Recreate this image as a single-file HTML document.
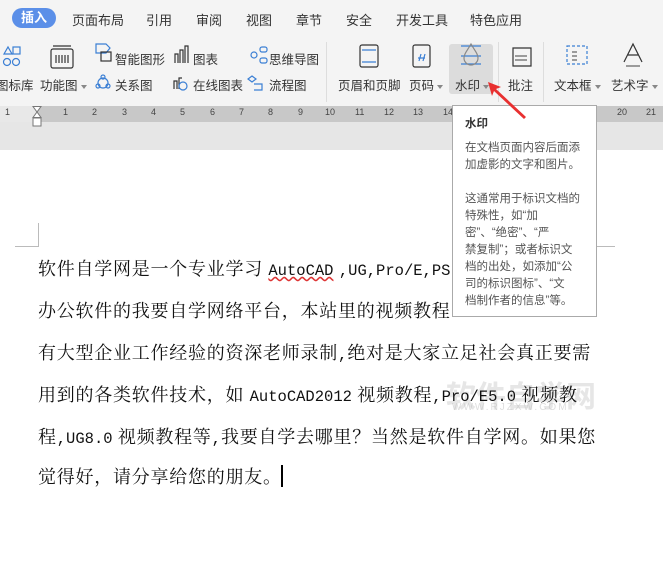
<!DOCTYPE html>
<html><head><meta charset="utf-8"><style>
*{margin:0;padding:0;box-sizing:border-box}
body{width:663px;height:586px;overflow:hidden;background:#fff;position:relative;font-family:"Liberation Sans","Noto Sans CJK SC",sans-serif;color:#333}
.a{position:absolute;white-space:nowrap}
.tab{position:absolute;top:10px;font-size:13px;color:#333}
.lbl{position:absolute;font-size:12.5px;color:#333;white-space:nowrap}
.tri{display:inline-block;border-left:3px solid transparent;border-right:3px solid transparent;border-top:4px solid #888;vertical-align:middle;margin-left:3px}
.ln{position:absolute;left:38px;font-family:"Noto Serif CJK SC",serif;font-size:18px;color:#111;white-space:nowrap;letter-spacing:0.75px}
.m{font-family:"Liberation Mono",monospace;font-size:15.5px;letter-spacing:0}
.tt{position:absolute;left:465px;font-size:11.5px;color:#555;white-space:nowrap}
</style></head><body>
<div class="a" style="left:0;top:0;width:663px;height:106px;background:#f4f4f4"></div>
<div class="a" style="left:12px;top:8px;width:44px;height:20px;border-radius:10px;background:#5b8fe8;color:#fff;font-size:13px;font-weight:bold;text-align:center;line-height:20px">插入</div>
<div class="tab" style="left:72px">页面布局</div>
<div class="tab" style="left:146px">引用</div>
<div class="tab" style="left:196px">审阅</div>
<div class="tab" style="left:246px">视图</div>
<div class="tab" style="left:296px">章节</div>
<div class="tab" style="left:346px">安全</div>
<div class="tab" style="left:396px">开发工具</div>
<div class="tab" style="left:470px">特色应用</div>
<div class="a" style="left:326px;top:42px;width:1px;height:60px;background:#ddd"></div>
<div class="a" style="left:498px;top:42px;width:1px;height:60px;background:#ddd"></div>
<div class="a" style="left:543px;top:42px;width:1px;height:60px;background:#ddd"></div>
<div class="a" style="left:449px;top:44px;width:44px;height:50px;background:#dcdcdc;border-radius:3px"></div>
<svg class="a" style="left:0;top:40px" width="663" height="30" fill="none" stroke-width="1.2">
<g stroke="#3b7fd4"><circle cx="7" cy="22" r="3.5"/><circle cx="16" cy="22" r="3.5"/><path d="M4 14l4-7 4 7z"/><rect x="13" y="7" width="7" height="7"/></g>
<g stroke="#333"><rect x="51" y="9" width="22" height="19" rx="2"/><path d="M53 6h18M56 15v8M59 15v8M62 15v8M65 15v8M68 15v8"/></g>
<g stroke="#3b7fd4"><path d="M96 4h10l4 4-4 5H96z"/></g><rect x="101" y="12" width="10" height="9" stroke="#333"/>
<g stroke="#333"><path d="M175 23V14h3v9M180 23V10h3v13M185 23V6h3v17"/></g>
<g stroke="#3b7fd4"><circle cx="254" cy="15" r="3"/><rect x="260" y="7" width="7" height="5" rx="2"/><rect x="260" y="18" width="7" height="5" rx="2"/></g>
<g stroke="#333"><rect x="360" y="5" width="18" height="22" rx="2"/><rect x="413" y="5" width="17" height="22" rx="2"/><path d="M513 8h18v18h-18z"/><rect x="567" y="6" width="20" height="18" stroke="#3b7fd4" stroke-dasharray="3 2"/><path d="M624 22l9-18 9 18M628 15h10"/></g>
<g stroke="#3b7fd4"><path d="M362 10h14M362 22h14M418 18h7M419 21l2-7M423 21l2-7"/><path d="M461 6h20M461 16h20M461 24h20"/></g>
<path d="M471 4c-4 7-7 10-7 14a7 7 0 0014 0c0-4-3-7-7-14z" stroke="#888"/>
<path d="M515 16h12M515 20h12M572 12h5M572 16h5M572 20h5M626 26h14" stroke="#666"/>
</svg>
<div class="lbl" style="left:115px;top:49px">智能图形</div>
<div class="lbl" style="left:193px;top:49px">图表</div>
<div class="lbl" style="left:269px;top:49px">思维导图</div>
<div class="lbl" style="left:-4px;top:75px">图标库</div>
<div class="lbl" style="left:40px;top:75px">功能图<span class="tri"></span></div>
<svg class="a" style="left:94px;top:73px" width="200" height="20" fill="none" stroke-width="1.2"><g stroke="#3b7fd4"><circle cx="9" cy="10" r="5"/><circle cx="9" cy="4" r="2"/><circle cx="4" cy="13" r="2"/><circle cx="14" cy="13" r="2"/></g><g stroke="#333"><path d="M80 16V8h3v8M85 16V5h3"/></g><circle cx="89" cy="13" r="4" stroke="#3b7fd4"/><path d="M158 3l4 3-4 3-4-3zM160 11h8v6h-8" stroke="#3b7fd4"/></svg>
<div class="lbl" style="left:115px;top:75px">关系图</div>
<div class="lbl" style="left:193px;top:75px">在线图表</div>
<div class="lbl" style="left:269px;top:75px">流程图</div>
<div class="lbl" style="left:338px;top:75px">页眉和页脚</div>
<div class="lbl" style="left:409px;top:75px">页码<span class="tri"></span></div>
<div class="lbl" style="left:455px;top:75px">水印<span class="tri"></span></div>
<div class="lbl" style="left:508px;top:75px">批注</div>
<div class="lbl" style="left:554px;top:75px">文本框<span class="tri"></span></div>
<div class="lbl" style="left:611px;top:75px">艺术字<span class="tri"></span></div>
<div class="a" style="left:0;top:106px;width:663px;height:16px;background:#c8c8c8"></div>
<div class="a" style="left:0;top:106px;width:37px;height:16px;background:#e8e8e8"></div>
<div class="a" style="left:0;top:122px;width:663px;height:28px;background:#e6e6e6"></div>
<div class="a" style="left:0;top:107px;width:663px;font-size:9px;color:#444">
<span class="a" style="left:5px">1</span><span class="a" style="left:63px">1</span><span class="a" style="left:92px">2</span><span class="a" style="left:122px">3</span><span class="a" style="left:151px">4</span><span class="a" style="left:180px">5</span><span class="a" style="left:210px">6</span><span class="a" style="left:239px">7</span><span class="a" style="left:268px">8</span><span class="a" style="left:298px">9</span><span class="a" style="left:325px">10</span><span class="a" style="left:355px">11</span><span class="a" style="left:384px">12</span><span class="a" style="left:413px">13</span><span class="a" style="left:443px">14</span><span class="a" style="left:617px">20</span><span class="a" style="left:646px">21</span></div>
<svg class="a" style="left:32px;top:106px" width="12" height="22" fill="#fff" stroke="#777"><path d="M1 .5h8L5 6zM1 11.5h8L5 6z"/><rect x="1" y="12" width="8" height="8"/></svg>
<div class="a" style="left:15px;top:246px;width:23px;height:1px;background:#bbb"></div>
<div class="a" style="left:38px;top:223px;width:1px;height:24px;background:#bbb"></div>
<div class="a" style="left:597px;top:246px;width:18px;height:1px;background:#bbb"></div>
<div class="a" style="left:446px;top:372px;font-size:30px;color:rgba(200,200,200,.45);font-weight:bold">软件自学网</div>
<div class="a" style="left:452px;top:402px;font-size:10px;color:rgba(190,190,190,.5);letter-spacing:2px">WWW.RJZXW.COM</div>
<div class="ln" style="top:255px">软件自学网是一个专业学习 <span class="m" style="text-decoration:underline wavy #d33">AutoCAD</span> <span class="m">,UG,Pro/E,PS</span></div>
<div class="ln" style="top:297px">办公软件的我要自学网络平台，本站里的视频教程</div>
<div class="ln" style="top:339px">有大型企业工作经验的资深老师录制<span class="m">,</span>绝对是大家立足社会真正要需</div>
<div class="ln" style="top:381px">用到的各类软件技术，如 <span class="m">AutoCAD2012</span> 视频教程<span class="m">,Pro/E5.0</span> 视频教</div>
<div class="ln" style="top:423px">程<span class="m">,UG8.0</span> 视频教程等<span class="m">,</span>我要自学去哪里？当然是软件自学网。如果您</div>
<div class="ln" style="top:463px">觉得好，请分享给您的朋友。</div>
<div class="a" style="left:281px;top:465px;width:2px;height:22px;background:#000"></div>
<div class="a" style="left:452px;top:105px;width:145px;height:212px;background:#fff;border:1px solid #aaa"></div>
<div class="tt" style="top:115px;font-weight:bold;color:#333">水印</div>
<div class="tt" style="top:139px">在文档页面内容后面添</div>
<div class="tt" style="top:156px">加虚影的文字和图片。</div>
<div class="tt" style="top:190px">这通常用于标识文档的</div>
<div class="tt" style="top:207px">特殊性，如“加</div>
<div class="tt" style="top:224px">密”、“绝密”、“严</div>
<div class="tt" style="top:241px">禁复制”；或者标识文</div>
<div class="tt" style="top:258px">档的出处，如添加“公</div>
<div class="tt" style="top:275px">司的标识图标”、“文</div>
<div class="tt" style="top:292px">档制作者的信息”等。</div>
<svg class="a" style="left:480px;top:78px" width="50" height="45"><path d="M8 4l4 14 2-5 30 28 2-2-30-28 5-2z" fill="#e83030"/></svg>
</body></html>
